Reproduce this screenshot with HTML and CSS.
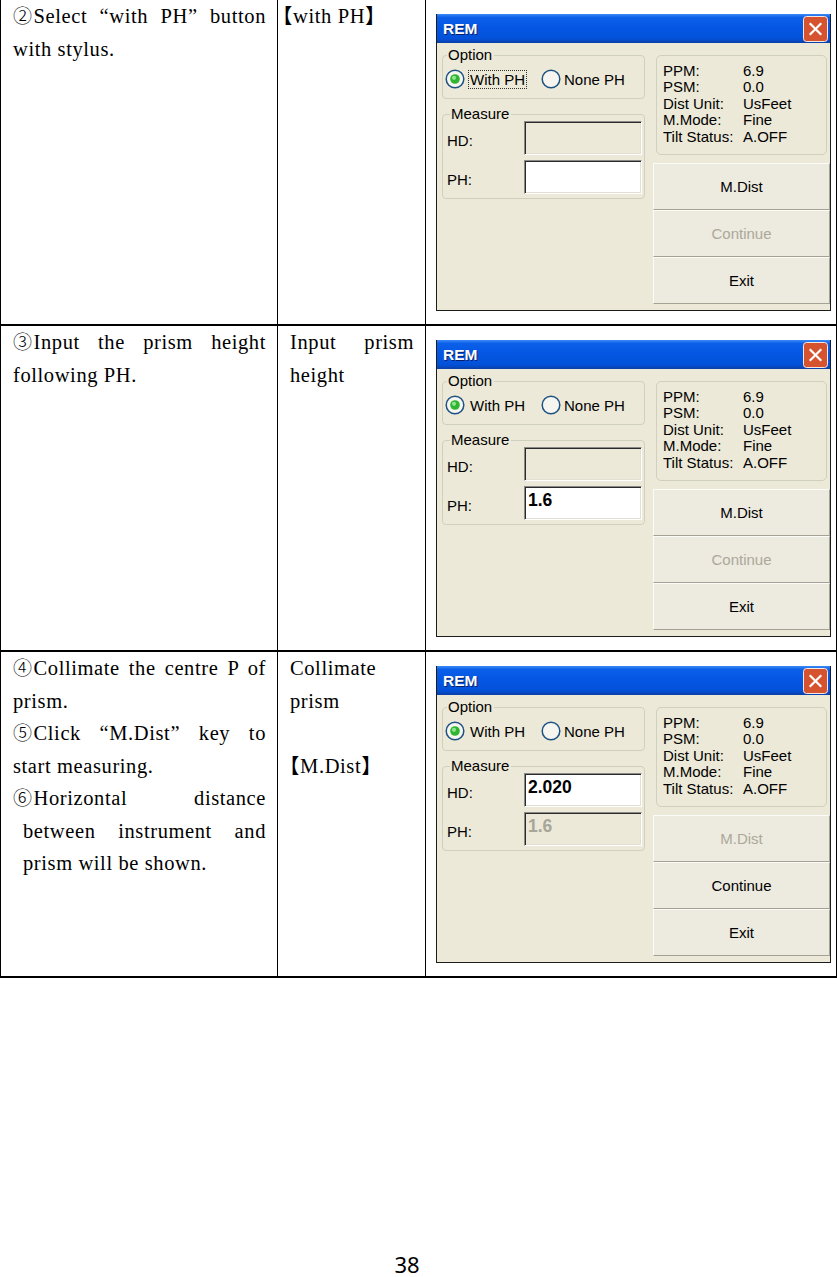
FILE: index.html
```html
<!DOCTYPE html>
<html lang="en">
<head>
  <meta charset="UTF-8" />
  <meta name="viewport" content="width=device-width, initial-scale=1.0"/>
  <title>REM - Remote elevation, page 38</title>
  <link rel="stylesheet" href="styles.css">
</head>
<body>

  <table class="steps">
    <colgroup>
      <col class="c-desc">
      <col class="c-key">
      <col class="c-shot">
    </colgroup>

    <!-- step 2 -->
    <tr>
      <td class="desc">
        <p><span class="num">②</span>Select “with PH” button with stylus.</p>
      </td>
      <td class="key">
        <p><span class="ob">【</span>with PH】</p>
      </td>
      <td class="shot">
        <div class="win">
          <div class="titlebar">
            <span class="title">REM</span>
            <span class="close">
              <svg width="25" height="26" viewBox="0 0 25 26"><rect x="0.5" y="0.5" width="24" height="25" rx="3" fill="#d65330" stroke="#f4e8e4"/><path d="M7.5 8 L17.5 18 M17.5 8 L7.5 18" stroke="#fff" stroke-width="2.2" stroke-linecap="square"/></svg>
            </span>
          </div>
          <div class="win-body">
            <div class="left">
              <fieldset class="group">
                <legend>Option</legend>
                <div class="radios">
                  <span class="radio">
                    <svg width="20" height="20" viewBox="0 0 20 20"><circle cx="10" cy="10" r="8.8" fill="#f6f5ef" stroke="#1d5283" stroke-width="1.5"/><circle cx="10" cy="10" r="4.8" fill="#2fb52f"/><circle cx="9" cy="8.8" r="2.1" fill="#8fe48f"/></svg>
                    <span class="focus">With PH</span>
                  </span>
                  <span class="radio">
                    <svg width="20" height="20" viewBox="0 0 20 20"><circle cx="10" cy="10" r="8.8" fill="#f6f5ef" stroke="#1d5283" stroke-width="1.5"/></svg>
                    <span>None PH</span>
                  </span>
                </div>
              </fieldset>
              <fieldset class="group measure">
                <legend>Measure</legend>
                <div class="field"><span class="lbl">HD:</span><span class="box off"></span></div>
                <div class="field"><span class="lbl">PH:</span><span class="box"></span></div>
              </fieldset>
            </div>
            <div class="right">
              <div class="info">
                <span>PPM:</span><span>6.9</span>
                <span>PSM:</span><span>0.0</span>
                <span>Dist Unit:</span><span>UsFeet</span>
                <span>M.Mode:</span><span>Fine</span>
                <span>Tilt Status:</span><span>A.OFF</span>
              </div>
              <div class="btn">M.Dist</div>
              <div class="btn off">Continue</div>
              <div class="btn">Exit</div>
            </div>
          </div>
        </div>
      </td>
    </tr>

    <!-- step 3 -->
    <tr>
      <td class="desc">
        <p><span class="num">③</span>Input the prism height following PH.</p>
      </td>
      <td class="key">
        <p>Input prism height</p>
      </td>
      <td class="shot">
        <div class="win">
          <div class="titlebar">
            <span class="title">REM</span>
            <span class="close">
              <svg width="25" height="26" viewBox="0 0 25 26"><rect x="0.5" y="0.5" width="24" height="25" rx="3" fill="#d65330" stroke="#f4e8e4"/><path d="M7.5 8 L17.5 18 M17.5 8 L7.5 18" stroke="#fff" stroke-width="2.2" stroke-linecap="square"/></svg>
            </span>
          </div>
          <div class="win-body">
            <div class="left">
              <fieldset class="group">
                <legend>Option</legend>
                <div class="radios">
                  <span class="radio">
                    <svg width="20" height="20" viewBox="0 0 20 20"><circle cx="10" cy="10" r="8.8" fill="#f6f5ef" stroke="#1d5283" stroke-width="1.5"/><circle cx="10" cy="10" r="4.8" fill="#2fb52f"/><circle cx="9" cy="8.8" r="2.1" fill="#8fe48f"/></svg>
                    <span class="nofocus">With PH</span>
                  </span>
                  <span class="radio">
                    <svg width="20" height="20" viewBox="0 0 20 20"><circle cx="10" cy="10" r="8.8" fill="#f6f5ef" stroke="#1d5283" stroke-width="1.5"/></svg>
                    <span>None PH</span>
                  </span>
                </div>
              </fieldset>
              <fieldset class="group measure">
                <legend>Measure</legend>
                <div class="field"><span class="lbl">HD:</span><span class="box off"></span></div>
                <div class="field"><span class="lbl">PH:</span><span class="box">1.6</span></div>
              </fieldset>
            </div>
            <div class="right">
              <div class="info">
                <span>PPM:</span><span>6.9</span>
                <span>PSM:</span><span>0.0</span>
                <span>Dist Unit:</span><span>UsFeet</span>
                <span>M.Mode:</span><span>Fine</span>
                <span>Tilt Status:</span><span>A.OFF</span>
              </div>
              <div class="btn">M.Dist</div>
              <div class="btn off">Continue</div>
              <div class="btn">Exit</div>
            </div>
          </div>
        </div>
      </td>
    </tr>

    <!-- steps 4-6 -->
    <tr>
      <td class="desc">
        <p><span class="num">④</span>Collimate the centre P of prism.</p>
        <p><span class="num">⑤</span>Click “M.Dist” key to start measuring.</p>
        <p class="hang"><span class="num">⑥</span>Horizontal distance between instrument and prism will be shown.</p>
      </td>
      <td class="key">
        <p>Collimate prism</p>
        <p>&nbsp;</p>
        <p><span class="ob2">【</span>M.Dist】</p>
      </td>
      <td class="shot">
        <div class="win">
          <div class="titlebar">
            <span class="title">REM</span>
            <span class="close">
              <svg width="25" height="26" viewBox="0 0 25 26"><rect x="0.5" y="0.5" width="24" height="25" rx="3" fill="#d65330" stroke="#f4e8e4"/><path d="M7.5 8 L17.5 18 M17.5 8 L7.5 18" stroke="#fff" stroke-width="2.2" stroke-linecap="square"/></svg>
            </span>
          </div>
          <div class="win-body">
            <div class="left">
              <fieldset class="group">
                <legend>Option</legend>
                <div class="radios">
                  <span class="radio">
                    <svg width="20" height="20" viewBox="0 0 20 20"><circle cx="10" cy="10" r="8.8" fill="#f6f5ef" stroke="#1d5283" stroke-width="1.5"/><circle cx="10" cy="10" r="4.8" fill="#2fb52f"/><circle cx="9" cy="8.8" r="2.1" fill="#8fe48f"/></svg>
                    <span class="nofocus">With PH</span>
                  </span>
                  <span class="radio">
                    <svg width="20" height="20" viewBox="0 0 20 20"><circle cx="10" cy="10" r="8.8" fill="#f6f5ef" stroke="#1d5283" stroke-width="1.5"/></svg>
                    <span>None PH</span>
                  </span>
                </div>
              </fieldset>
              <fieldset class="group measure">
                <legend>Measure</legend>
                <div class="field"><span class="lbl">HD:</span><span class="box">2.020</span></div>
                <div class="field"><span class="lbl">PH:</span><span class="box off dim">1.6</span></div>
              </fieldset>
            </div>
            <div class="right">
              <div class="info">
                <span>PPM:</span><span>6.9</span>
                <span>PSM:</span><span>0.0</span>
                <span>Dist Unit:</span><span>UsFeet</span>
                <span>M.Mode:</span><span>Fine</span>
                <span>Tilt Status:</span><span>A.OFF</span>
              </div>
              <div class="btn off">M.Dist</div>
              <div class="btn">Continue</div>
              <div class="btn">Exit</div>
            </div>
          </div>
        </div>
      </td>
    </tr>
  </table>

  <div class="page-num">38</div>

</body>
</html>
```

FILE: styles.css
```css
body {
  margin: 0;
  background: #fff;
  color: #000;
  font-family: "Liberation Serif", "Noto Sans CJK SC", serif;
}

/* page table */
.steps {
  width: 836px;
  table-layout: fixed;
  border-collapse: collapse;
  margin-top: -2px;
}
.c-desc { width: 277px; }
.c-key { width: 148px; }
.c-shot { width: 411px; }

.steps td {
  border: 1px solid #000;
  border-top-width: 2px;
  border-bottom-width: 2px;
  vertical-align: top;
}
.steps td:last-child {
  border-right-width: 2px;
}
.desc, .key {
  font-size: 20.5px;
  letter-spacing: 0.6px;
  line-height: 32.5px;
  text-align: justify;
}
.desc { padding: 0 11px 0 12px; }
.key { padding: 0 11px 0 12px; }
.desc p, .key p {
  margin: 0;
}
.desc .hang {
  padding-left: 10px;
  text-indent: -10px;
}
.num {
  display: inline-block;
  margin-right: 1.5px;
  font-family: "Noto Sans CJK SC", sans-serif;
  font-weight: 300;
  font-size: 19px;
  line-height: 19px;
  letter-spacing: 0;
  text-indent: 0;
}
.ob {
  margin-left: -18px;
}
.ob2 {
  margin-left: -11px;
}
.shot {
  padding: 14px 3px 13px 10px;
}

/* window */
.win {
  width: 395px;
  height: 297px;
  box-sizing: border-box;
  background: #ece9d8;
  border: 1px solid #1d1d1d;
  border-top: none;
  font-family: "Liberation Sans", sans-serif;
  font-size: 15px;
  color: #000;
  letter-spacing: 0;
}
.titlebar {
  height: 29px;
  display: flex;
  align-items: center;
  justify-content: space-between;
  padding: 0 2px 0 6px;
  background: linear-gradient(#3d8bf7 0%, #0b5fe8 12%, #0456e2 50%, #0351d9 85%, #0a3fa6 100%);
}
.title {
  color: #fff;
  font-weight: bold;
  font-size: 15.5px;
  text-shadow: 1px 1px 0 #0a1f66;
}
.close {
  display: flex;
}
.win-body {
  display: flex;
  height: 267px;
  padding-left: 5px;
}
.left {
  width: 203px;
  padding-top: 5px;
}
.right {
  width: 177px;
  margin-left: 8px;
  padding-top: 12px;
}

.group {
  margin: 0;
  min-width: 0;
  border: 1px solid #d0d0bf;
  border-radius: 4px;
  padding: 7px 1px 9px 1px;
}
.group legend {
  margin-left: 3px;
  padding: 0 2px 0 1px;
  line-height: 14px;
}
.radios {
  display: flex;
  align-items: center;
  height: 20px;
  padding-left: 1px;
}
.radio {
  display: flex;
  align-items: center;
  gap: 3px;
  margin-right: 14px;
}
.radio svg {
  display: block;
}
.focus, .nofocus {
  padding: 0 1px;
  border: 1px dotted transparent;
}
.focus {
  border-color: #333;
}

.measure {
  margin-top: 8px;
  padding: 0 1px 4px 4px;
}
.field {
  display: flex;
  align-items: center;
}
.field + .field {
  margin-top: 5px;
}
.lbl {
  width: 77px;
  padding-top: 4px;
}
.box {
  width: 118px;
  height: 34px;
  box-sizing: border-box;
  background: #fff;
  border: 1px solid;
  border-color: #8a8a86 #fff #fff #8a8a86;
  box-shadow: inset 1px 1px 0 #2a2a2a, inset -1px -1px 0 #e2dfd2;
  padding: 3px 3px;
  font-size: 17.5px;
  font-weight: bold;
  line-height: 20px;
}
.box.off {
  background: #ece9d8;
}
.box.dim {
  color: #a8a599;
}

.info {
  margin: 0 3px;
  height: 100px;
  box-sizing: border-box;
  border: 1px solid #d0d0bf;
  border-radius: 5px;
  padding: 6px 0 0 6px;
  display: grid;
  grid-template-columns: 80px 1fr;
  grid-auto-rows: 16.5px;
  align-items: center;
}
.btn {
  height: 47px;
  box-sizing: border-box;
  display: flex;
  align-items: center;
  justify-content: center;
  background: #edeae0;
  border: 1px solid;
  border-color: #fbfbf8 #a5a293 #a5a293 #fbfbf8;
}
.info + .btn {
  margin-top: 8px;
}
.btn.off {
  color: #aca899;
}

.page-num {
  margin-top: 276px;
  padding-right: 23px;
  text-align: center;
  font-family: "Noto Sans", "DejaVu Sans", sans-serif;
  font-size: 22px;
  line-height: 20px;
}
```
